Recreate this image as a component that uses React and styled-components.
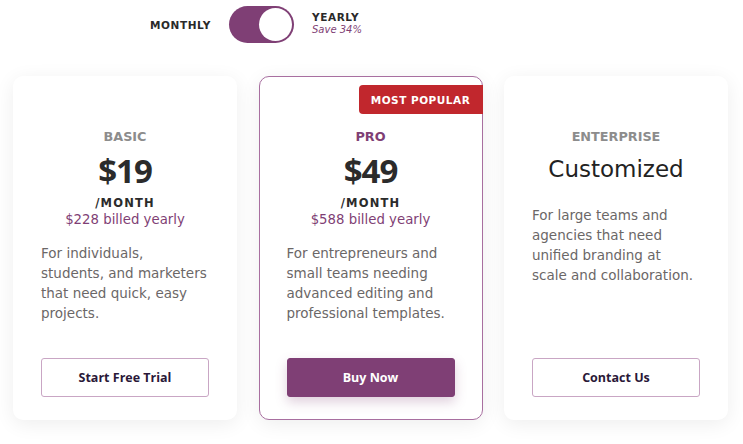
import React from 'react';
import styled, { createGlobalStyle } from 'styled-components';

const GlobalStyle = createGlobalStyle`
  body {
    margin: 0;
    background: #ffffff;
    font-family: 'DejaVu Sans', 'Open Sans', sans-serif;
  }
`;

const Page = styled.div`
  width: 743px;
  height: 444px;
  overflow: hidden;
`;

const ToggleRow = styled.div`
  display: flex;
  align-items: center;
  gap: 18px;
  padding: 6px 0 0 150px;
  height: 37px;
`;

const ToggleLabel = styled.span`
  font-size: 10.5px;
  font-weight: bold;
  letter-spacing: 0.6px;
  color: #2a2a2a;
`;

const Track = styled.div`
  width: 65px;
  height: 37px;
  border-radius: 19px;
  background: #7f3f75;
  display: flex;
  align-items: center;
  justify-content: flex-end;
  padding: 0 2px;
  box-sizing: border-box;
`;

const Knob = styled.div`
  width: 33px;
  height: 33px;
  border-radius: 50%;
  background: #ffffff;
`;

const YearlyBox = styled.div`
  display: flex;
  flex-direction: column;
  gap: 1px;
  margin-top: -4px;
`;

const Save = styled.span`
  font-size: 10px;
  font-style: italic;
  color: #7f3f75;
`;

const Cards = styled.div`
  display: flex;
  gap: 21.5px;
  margin-top: 33px;
  padding-left: 13px;
`;

const Card = styled.div`
  position: relative;
  width: 224px;
  height: 344px;
  box-sizing: border-box;
  background: #ffffff;
  border-radius: 10px;
  border: 1px solid ${(p) => (p.$featured ? '#a86fa0' : 'transparent')};
  box-shadow: 0 4px 20px rgba(0, 0, 0, 0.07);
  padding: 51px 27px 22px;
  display: flex;
  flex-direction: column;
  align-items: center;
`;

const Badge = styled.div`
  position: absolute;
  top: 8px;
  right: -1px;
  width: 124px;
  height: 29px;
  background: #c1272d;
  color: #ffffff;
  font-size: 10.5px;
  font-weight: bold;
  letter-spacing: 0.5px;
  display: flex;
  align-items: center;
  justify-content: center;
  border-radius: 4px 0 0 4px;
`;

const Tier = styled.div`
  font-size: 12.8px;
  font-weight: bold;
  line-height: 17px;
  color: ${(p) => (p.$featured ? '#7f3f75' : '#8c8c8c')};
`;

const Price = styled.div`
  margin-top: 6px;
  font-family: 'Open Sans', sans-serif;
  font-size: 33px;
  font-weight: 700;
  letter-spacing: -1px;
  line-height: 40px;
  color: #2b2b2b;
`;

const Custom = styled.div`
  margin-top: 8px;
  font-size: 23px;
  line-height: 32px;
  color: #222222;
`;

const Per = styled.div`
  margin-top: 5px;
  font-size: 11.5px;
  font-weight: bold;
  letter-spacing: 1.2px;
  line-height: 15px;
  color: #2b2b2b;
`;

const Billed = styled.div`
  font-size: 13.3px;
  line-height: 18px;
  color: #7f3f75;
`;

const Desc = styled.p`
  align-self: stretch;
  margin: ${(p) => (p.$tight ? '20px' : '14px')} 0 0;
  font-size: 13.5px;
  line-height: 20px;
  color: #6b6767;
  white-space: pre-line;
`;

const Button = styled.button`
  margin-top: auto;
  align-self: stretch;
  height: 39px;
  border-radius: 3px;
  font-family: 'Open Sans', sans-serif;
  font-size: 12.5px;
  font-weight: 700;
  cursor: pointer;
  border: 1px solid ${(p) => (p.$primary ? '#7f3f75' : '#c9a6c4')};
  background: ${(p) => (p.$primary ? '#7f3f75' : '#ffffff')};
  color: ${(p) => (p.$primary ? '#ffffff' : '#2a1838')};
  box-shadow: ${(p) => (p.$primary ? '0 5px 12px rgba(127, 63, 117, 0.25)' : 'none')};
`;

const plans = [
  {
    tier: 'BASIC',
    price: '$19',
    billed: '$228 billed yearly',
    desc: 'For individuals, students, and marketers that need quick, easy projects.',
    cta: 'Start Free Trial',
  },
  {
    tier: 'PRO',
    price: '$49',
    billed: '$588 billed yearly',
    desc: 'For entrepreneurs and small teams needing advanced editing and professional templates.',
    cta: 'Buy Now',
    featured: true,
  },
  {
    tier: 'ENTERPRISE',
    custom: 'Customized',
    desc: 'For large teams and agencies that need unified branding at\nscale and collaboration.',
    cta: 'Contact Us',
  },
];

export default function App() {
  return (
    <Page>
      <GlobalStyle />
      <ToggleRow>
        <ToggleLabel>MONTHLY</ToggleLabel>
        <Track>
          <Knob />
        </Track>
        <YearlyBox>
          <ToggleLabel>YEARLY</ToggleLabel>
          <Save>Save 34%</Save>
        </YearlyBox>
      </ToggleRow>
      <Cards>
        {plans.map((p) => (
          <Card key={p.tier} $featured={p.featured}>
            {p.featured && <Badge>MOST POPULAR</Badge>}
            <Tier $featured={p.featured}>{p.tier}</Tier>
            {p.custom ? (
              <Custom>{p.custom}</Custom>
            ) : (
              <>
                <Price>{p.price}</Price>
                <Per>/MONTH</Per>
                <Billed>{p.billed}</Billed>
              </>
            )}
            <Desc $tight={!!p.custom}>{p.desc}</Desc>
            <Button $primary={p.featured}>{p.cta}</Button>
          </Card>
        ))}
      </Cards>
    </Page>
  );
}
